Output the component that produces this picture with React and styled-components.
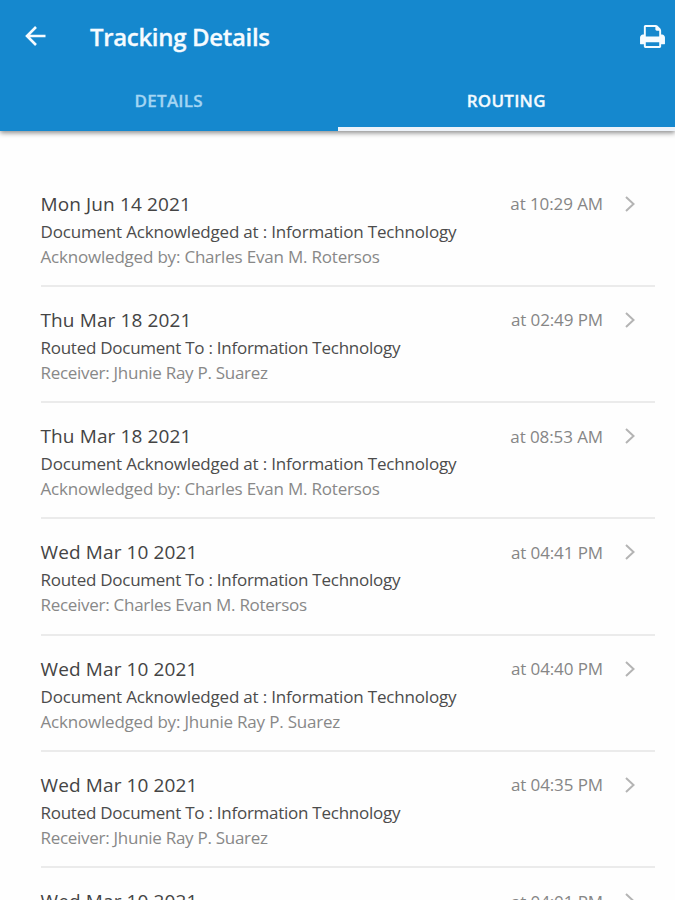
import { useState } from "react";
import styled, { createGlobalStyle } from "styled-components";

const GlobalStyle = createGlobalStyle`
  * {
    box-sizing: border-box;
  }

  body {
    margin: 0;
    background-color: #fefefe;
    font-family: "Open Sans", "Noto Sans", sans-serif;
  }
`;

const Screen = styled.div`
  display: flex;
  flex-direction: column;
  height: 900px;
  overflow: hidden;
`;

const Header = styled.header`
  height: 130.6px;
  flex-shrink: 0;
  display: flex;
  flex-direction: column;
  background-color: #1588ce;
  box-shadow: 0 2px 5px 0 rgba(0,0,0,0.45);
`;

const TitleBar = styled.div`
  height: 73px;
  display: flex;
  align-items: center;
  padding: 0 10px 0 25px;
`;

const IconButton = styled.button`
  display: flex;
  padding: 0;
  border-style: none;
  background-color: transparent;
  color: #f5fbff;
  cursor: pointer;
`;

const Title = styled.h1`
  flex-grow: 1;
  margin: 0 0 0 43px;
  color: #f5fbff;
  font-size: 24px;
  font-weight: 600;
  line-height: 32px;
  letter-spacing: -0.33px;
  -webkit-text-stroke: 0.3px #f5fbff;
`;

const Tabs = styled.nav`
  flex-grow: 1;
  display: grid;
  grid-template-columns: 1fr 1fr;
`;

const Tab = styled.button`
  padding: 3px 0 0;
  border: 0 solid transparent;
  border-bottom: 4px solid ${props => props.$active ? '#edf3fa' : 'transparent'};
  background-color: transparent;
  color: ${props => props.$active ? '#f3faff' : '#a3d5f3'};
  font-family: inherit;
  font-size: 17px;
  font-weight: 600;
  line-height: 24px;
  letter-spacing: 0.25px;
  -webkit-text-stroke: 0.3px currentColor;
  cursor: pointer;
`;

const RouteList = styled.ul`
  margin: 0;
  padding: 40px 20px 0 40.5px;
  list-style-type: none;
`;

const RouteItem = styled.li`
  height: 116.25px;
  padding-top: 19px;
  border-bottom: 2px solid #ebebeb;
  white-space: nowrap;
`;

const TopRow = styled.div`
  display: flex;
  align-items: center;
  height: 28px;
  padding-right: 20px;
`;

const DateText = styled.div`
  flex-grow: 1;
  color: #444;
  font-size: 19px;
  line-height: 28px;
  letter-spacing: 0.12px;
`;

const Time = styled.div`
  margin-right: 22px;
  padding-top: 1px;
  color: #868686;
  font-size: 17px;
  line-height: 28px;
  letter-spacing: -0.1px;
`;

const Action = styled.div`
  color: #4c4c4c;
  font-size: 17px;
  line-height: 28px;
  letter-spacing: ${props => props.$tight ? '-0.26px' : '-0.18px'};
`;

const Person = styled.div`
  color: #888;
  font-size: 17px;
  line-height: 22px;
  letter-spacing: ${props => props.$tight ? '-0.28px' : '-0.2px'};
`;

function BackIcon() {
  return (
    <svg width="22" height="22" viewBox="0 0 22 22" fill="none" stroke="currentColor" strokeWidth="2.6">
      <path d="M20.5 10H2.5M11 1L2 10l9 9" />
    </svg>
  );
}

function PrintIcon() {
  return (
    <svg width="25" height="23" viewBox="0 128 1664 1536" fill="currentColor">
      <path d="M384 1536h896v-256h-896v256zM384 896h896v-384h-160q-40 0-68-28t-28-68v-160h-640v640zM1664 960v416q0 13-9.5 22.5t-22.5 9.5h-224v160q0 40-28 68t-68 28h-960q-40 0-68-28t-28-68v-160h-224q-13 0-22.5-9.5t-9.5-22.5v-416q0-79 56.5-135.5t135.5-56.5h64v-544q0-40 28-68t68-28h672q40 0 88 20t76 48l152 152q28 28 48 76t20 88v256h64q79 0 135.5 56.5t56.5 135.5z" />
    </svg>
  );
}

function ChevronIcon() {
  return (
    <svg width="10" height="16" viewBox="0 0 10 16" fill="none" stroke="#b4b4b4" strokeWidth="2">
      <path d="M1 1l7.5 7L1 15" />
    </svg>
  );
}

const routes = [
  { date: 'Mon Jun 14 2021', time: '10:29 AM', type: 'ack', person: 'Charles Evan M. Rotersos' },
  { date: 'Thu Mar 18 2021', time: '02:49 PM', type: 'routed', person: 'Jhunie Ray P. Suarez' },
  { date: 'Thu Mar 18 2021', time: '08:53 AM', type: 'ack', person: 'Charles Evan M. Rotersos' },
  { date: 'Wed Mar 10 2021', time: '04:41 PM', type: 'routed', person: 'Charles Evan M. Rotersos' },
  { date: 'Wed Mar 10 2021', time: '04:40 PM', type: 'ack', person: 'Jhunie Ray P. Suarez' },
  { date: 'Wed Mar 10 2021', time: '04:35 PM', type: 'routed', person: 'Jhunie Ray P. Suarez' },
  { date: 'Wed Mar 10 2021', time: '04:01 PM', type: 'ack', person: 'Jhunie Ray P. Suarez' },
];

const labels = {
  ack: { action: 'Document Acknowledged at', person: 'Acknowledged by' },
  routed: { action: 'Routed Document To', person: 'Receiver' },
};

function App() {

  const [tab, setTab] = useState('routing');

  return (
    <Screen>
      <GlobalStyle />
      <Header>
        <TitleBar>
          <IconButton aria-label="Back"><BackIcon /></IconButton>
          <Title>Tracking Details</Title>
          <IconButton aria-label="Print"><PrintIcon /></IconButton>
        </TitleBar>
        <Tabs>
          <Tab $active={tab === 'details'} onClick={() => setTab('details')}>DETAILS</Tab>
          <Tab $active={tab === 'routing'} onClick={() => setTab('routing')}>ROUTING</Tab>
        </Tabs>
      </Header>
      <RouteList>
        {routes.map((route, i) => (
          <RouteItem key={i}>
            <TopRow>
              <DateText>{route.date}</DateText>
              <Time>at {route.time}</Time>
              <ChevronIcon />
            </TopRow>
            <Action $tight={route.type === 'routed'}>
              {`${labels[route.type].action} : Information Technology`}
            </Action>
            <Person $tight={route.type === 'routed'}>
              {`${labels[route.type].person}: ${route.person}`}
            </Person>
          </RouteItem>
        ))}
      </RouteList>
    </Screen>
  );
}

export default App;
